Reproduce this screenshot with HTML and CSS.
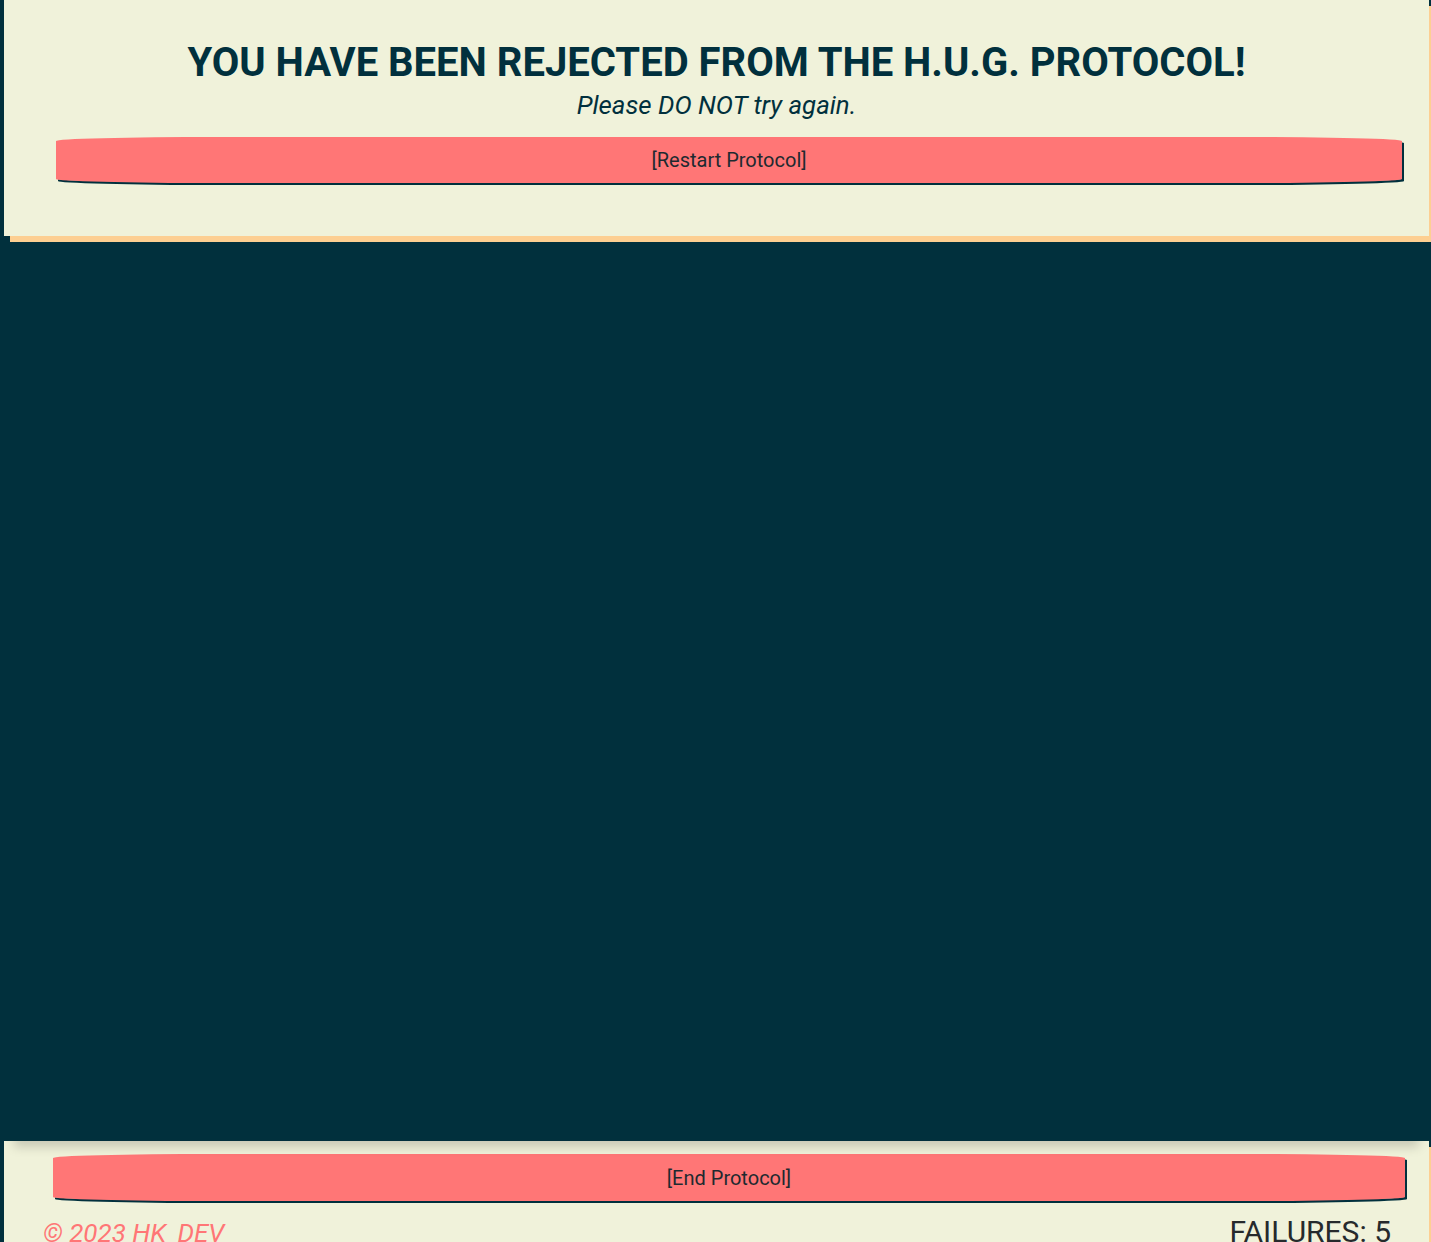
FILE: index.html
```html
<!DOCTYPE html>
<html>
<head>
<meta charset="utf-8">
<link rel="stylesheet" href="styles.css">
</head>
<body>
<div class="page">
  <header class="panel top">
    <h1 class="title">YOU HAVE BEEN REJECTED FROM THE H.U.G. PROTOCOL!</h1>
    <p class="subtitle">Please DO NOT try again.</p>
    <button class="btn restart">[Restart Protocol]</button>
  </header>
  <main class="stage"></main>
  <footer class="panel bottom">
    <button class="btn end">[End Protocol]</button>
    <div class="footline">
      <span class="copy">© 2023 HK_DEV</span>
      <span class="fails">FAILURES: 5</span>
    </div>
  </footer>
</div>
</body>
</html>
```

FILE: styles.css
```css
html, body {
  margin: 0;
  padding: 0;
}
body {
  background: #01303d;
  font-family: Roboto, "Liberation Sans", sans-serif;
  color: #01303d;
}
.page {
  display: flex;
  flex-direction: column;
  padding-left: 4px;
  width: 1425px;
}
.panel {
  background: #f0f2da;
  box-shadow: 6px 6px 0 #fdcf92;
}
.top {
  height: 236px;
  box-sizing: border-box;
  padding-top: 40px;
  display: flex;
  flex-direction: column;
  align-items: center;
  position: relative;
  z-index: 2;
}
.title {
  margin: 0;
  font-size: 40px;
  font-weight: 700;
  line-height: 46px;
  color: #01303d;
}
.subtitle {
  margin: 0;
  font-style: italic;
  font-size: 25.8px;
  line-height: 38px;
  color: #01303d;
}
.btn {
  display: block;
  background: #ff7676;
  border: none;
  border-radius: 160px / 4px;
  box-shadow: 2px 2px 0 #01303d;
  font-family: Roboto, "Liberation Sans", sans-serif;
  font-size: 20px;
  color: #1e2a30;
  padding: 0;
}
.restart {
  margin-top: 13px;
  margin-left: 52px;
  align-self: flex-start;
  width: 1346px;
  height: 46px;
}
.stage {
  height: 905px;
  background: #01303d;
  box-shadow: 0 16px 10px -10px rgba(0, 0, 0, 0.17);
  position: relative;
  z-index: 1;
}
.bottom {
  padding: 13px 0 0;
  min-height: 140px;
}
.end {
  margin-left: 49px;
  width: 1352px;
  height: 47px;
}
.footline {
  display: flex;
  justify-content: space-between;
  align-items: baseline;
  padding: 13px 38px 0 39px;
}
.copy {
  font-style: italic;
  font-size: 26px;
  color: #ff7676;
}
.fails {
  font-size: 30px;
  color: #262a2c;
}
```
